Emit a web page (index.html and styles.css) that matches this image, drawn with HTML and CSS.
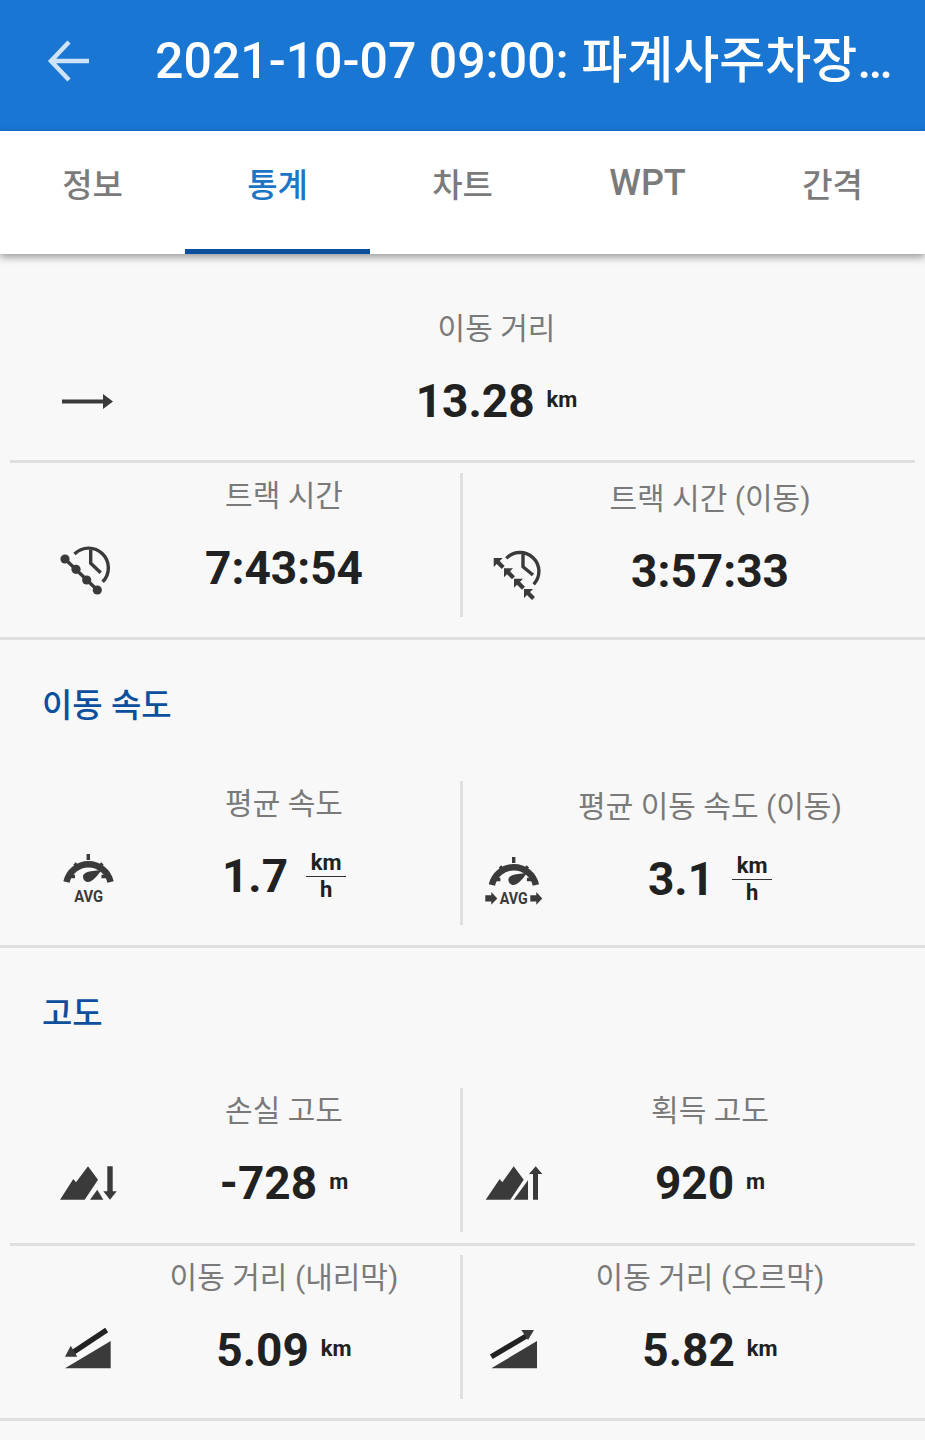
FILE: index.html
```html
<!DOCTYPE html>
<html lang="ko">
<head>
<meta charset="utf-8">
<title>트랙 통계</title>
<link rel="stylesheet" href="styles.css">
</head>
<body>
<header class="appbar">
  <svg class="back" viewBox="0 0 60 60"><path d="M47 30H11M27 11L9 30L27 49"/></svg>
  <h1 class="title">2021-10-07 09:00: 파계사주차장…</h1>
</header>
<nav class="tabs">
  <div class="tab">정보</div>
  <div class="tab active">통계</div>
  <div class="tab">차트</div>
  <div class="tab latin">WPT</div>
  <div class="tab">간격</div>
</nav>
<main class="content">
  <section class="row-wide">
    <div class="cell cell-wide">
      <div class="label">이동 거리</div>
      <svg class="icon" viewBox="0 0 60 60"><path d="M2 28.5H43V23L53 30.5L43 38V32.5H2Z"/></svg>
      <div class="value">13.28<span class="unit">km</span></div>
    </div>
  </section>
  <hr class="rule inset">
  <section class="row row-a">
    <div class="cell cell-left">
      <div class="label">트랙 시간</div>
      <svg class="icon" viewBox="0 0 60 60">
        <path class="line" d="M14.5 16A18.3 18.3 0 1 1 42.7 43.7M30.7 11.3V25.3L40.7 34.7"/>
        <path class="line" d="M5 21L37.3 52"/>
        <circle cx="5" cy="21" r="4.6"/><circle cx="16" cy="31.3" r="4.6"/><circle cx="26.7" cy="42" r="4.6"/><circle cx="37.3" cy="52" r="4.6"/>
      </svg>
      <div class="value">7:43:54</div>
    </div>
    <div class="cell cell-right shifted">
      <div class="label">트랙 시간 (이동)</div>
      <svg class="icon" viewBox="0 0 60 60">
        <path class="line" d="M23.4 17.3A18.3 18.3 0 1 1 50.7 43.3M40 12.3V25.7L50 34"/>
        <path d="M10.7 17h9l-3 3l5 5l-3 3l-5-5l-3 3z"/>
        <path d="M21 27.3h9l-3 3l5 5l-3 3l-5-5l-3 3z"/>
        <path d="M31 37.7h9l-3 3l5 5l-3 3l-5-5l-3 3z"/>
        <path d="M41 48h9l-3 3l5 5l-3 3l-5-5l-3 3z"/>
      </svg>
      <div class="value">3:57:33</div>
    </div>
  </section>
  <hr class="rule">
  <h2 class="heading">이동 속도</h2>
  <section class="row row-b">
    <div class="cell cell-left">
      <div class="label">평균 속도</div>
      <svg class="icon" viewBox="0 0 60 60">
        <path class="gauge" d="M6.5 36A22.5 22.5 0 0 1 50.5 36"/>
        <path class="line" d="M10 30.5H15M14.5 17.5L18 21M28.3 8V14M42.5 17.5L39 21M46.5 30.5H41.5"/>
        <path d="M23 30.5C23 27 27 25 41.7 24C35 33 31 36 28 36C25 36 23 33.5 23 30.5Z"/>
        <text class="avg" x="28.7" y="56" textLength="29" lengthAdjust="spacingAndGlyphs">AVG</text>
      </svg>
      <div class="value">1.7<span class="frac"><span>km</span><span class="den">h</span></span></div>
    </div>
    <div class="cell cell-right shifted">
      <div class="label">평균 이동 속도 (이동)</div>
      <svg class="icon" viewBox="0 0 60 60">
        <path class="gauge" d="M8.9 36A22.5 22.5 0 0 1 52.9 36"/>
        <path class="line" d="M12.4 30.5H17.4M16.9 17.5L20.4 21M30.7 8V14M44.9 17.5L41.4 21M48.9 30.5H43.9"/>
        <path d="M25.4 30.5C25.4 27 29.4 25 44.1 24C37.4 33 33.4 36 30.4 36C27.4 36 25.4 33.5 25.4 30.5Z"/>
        <text class="avg" x="30.7" y="54.7" textLength="28" lengthAdjust="spacingAndGlyphs">AVG</text>
        <path d="M2.3 46.3H8.3V43L14.3 49.4L8.3 55.7V52.4H2.3Z"/>
        <path d="M47.3 46.3H53.3V43L59.3 49.4L53.3 55.7V52.4H47.3Z"/>
      </svg>
      <div class="value">3.1<span class="frac"><span>km</span><span class="den">h</span></span></div>
    </div>
  </section>
  <hr class="rule">
  <h2 class="heading heading-alt">고도</h2>
  <section class="row row-c">
    <div class="cell cell-left">
      <div class="label">손실 고도</div>
      <svg class="icon" viewBox="0 0 60 60">
        <path d="M0 46.7L13.3 26L16 29.3L28 13.3L38 26.7L24.7 46.7Z"/>
        <path d="M30 46.7L37.3 36.7L43.3 46.7Z"/>
        <path d="M47.3 13.3H52.7V38.3H56.7L50 46.7L43.3 38.3H47.3Z"/>
      </svg>
      <div class="value">-728<span class="unit">m</span></div>
    </div>
    <div class="cell cell-right">
      <div class="label">획득 고도</div>
      <svg class="icon" viewBox="0 0 60 60">
        <path d="M2.7 46.7L16.7 26L19.3 29.3L30.7 13.3L40.7 26.7L27.3 46.7Z"/>
        <path d="M30.7 46.7L45 27.3V46.7Z"/>
        <path d="M50 46.7V21H46L52.7 13.3L59.3 21H55V46.7Z"/>
      </svg>
      <div class="value">920<span class="unit">m</span></div>
    </div>
  </section>
  <hr class="rule inset">
  <section class="row row-d">
    <div class="cell cell-left">
      <div class="label">이동 거리 (내리막)</div>
      <svg class="icon" viewBox="0 0 60 60">
        <path d="M5 48.3L50.7 21V48.3Z"/>
        <path class="line thick" d="M46.7 10L11.7 33.3"/>
        <path d="M5 36.7L10.7 25.7L17.3 36.7Z"/>
      </svg>
      <div class="value">5.09<span class="unit">km</span></div>
    </div>
    <div class="cell cell-right">
      <div class="label">이동 거리 (오르막)</div>
      <svg class="icon" viewBox="0 0 60 60">
        <path d="M8.3 48.3L54 21V48.3Z"/>
        <path class="line thick" d="M8.3 36.7L45 15"/>
        <path d="M38.3 10H51L45 20Z"/>
      </svg>
      <div class="value">5.82<span class="unit">km</span></div>
    </div>
  </section>
  <hr class="rule">
</main>
</body>
</html>
```
FILE: styles.css
```css
* { box-sizing: border-box; }
html, body { margin: 0; padding: 0; }
body {
  width: 925px;
  height: 1440px;
  overflow: hidden;
  background: #f8f8f8;
  font-family: Roboto, "Noto Sans CJK KR", sans-serif;
}
.appbar {
  height: 131px;
  background: #1976d3;
  display: flex;
  align-items: center;
  padding: 0 10px 10px 42px;
}
.back {
  width: 60px;
  height: 60px;
  flex: none;
  fill: none;
  stroke: #cfe3f8;
  stroke-width: 4.5;
}
.title {
  margin: 0 0 0 53px;
  font-size: 50px;
  line-height: 60px;
  font-weight: 500;
  color: #fff;
  white-space: nowrap;
  overflow: hidden;
}
.tabs {
  position: relative;
  z-index: 1;
  height: 123px;
  background: #fff;
  display: grid;
  grid-template-columns: repeat(5, 185px);
  box-shadow: 0 3px 8px rgba(0, 0, 0, 0.4);
}
.tab {
  display: flex;
  justify-content: center;
  align-items: center;
  padding-bottom: 20px;
  font-size: 33px;
  font-weight: 500;
  color: #7b7b7b;
}
.tab.latin { font-size: 36px; }
.tab.active {
  color: #1c76c4;
  border-bottom: 5px solid #0c4f9c;
  padding-bottom: 15px;
}
.content { display: flex; flex-direction: column; }
.rule {
  margin: 0;
  border: 0;
  height: 3px;
  background: #dfdfdf;
}
.rule.inset { margin: 0 10px; }
.row-wide { padding: 52px 0 29px; height: 206px; }
.row {
  display: grid;
  grid-template-columns: 463px 462px;
  position: relative;
}
.row-a { padding: 10px 0 20px; }
.row-b { padding: 0 0 20px; }
.row-c { padding: 0 0 11px; }
.row-d { padding: 9px 0 19px; }
.cell {
  height: 144px;
  display: grid;
  grid-template-rows: 46px 60px;
  row-gap: 19px;
  align-items: center;
  align-content: start;
}
.cell-wide {
  height: auto;
  grid-template-columns: 114px 765px;
  padding: 0;
}
.cell-left {
  grid-template-columns: 114px 348px;
  padding-right: 0;
  border-right: 3px solid #dfdfdf;
}
.cell-left .label, .cell-left .value { position: relative; left: -4px; }
.cell-right { grid-template-columns: 60px 386px; padding-left: 20px; }
.cell-right .label, .cell-right .value { position: relative; left: 0; }
.cell-right.shifted { padding-top: 3px; }
.cell-right .label, .cell-right .value { margin-right: 52px; }
.label {
  grid-column: 2;
  grid-row: 1;
  text-align: center;
  font-size: 30px;
  line-height: 46px;
  color: #7a7a7a;
  white-space: nowrap;
}
.icon {
  grid-column: 1;
  grid-row: 2;
  width: 60px;
  height: 60px;
  margin-left: 60px;
  fill: #3a3a3a;
}
.cell-right .icon { margin-left: 0; }
.line {
  fill: none;
  stroke: #3a3a3a;
  stroke-width: 3.4;
}
.line.thick { stroke: #222; stroke-width: 5.4; }
.gauge {
  fill: none;
  stroke: #3a3a3a;
  stroke-width: 6.5;
}
.avg {
  font-size: 17px;
  font-weight: 700;
  text-anchor: middle;
  fill: #3a3a3a;
}
.value {
  grid-column: 2;
  grid-row: 2;
  display: flex;
  justify-content: center;
  align-items: center;
  font-size: 46px;
  line-height: 60px;
  font-weight: 700;
  color: #212121;
  white-space: nowrap;
}
.unit {
  margin-left: 12px;
  font-size: 22px;
  line-height: 24px;
  font-weight: 700;
  position: relative;
  top: -1px;
}
.frac {
  display: flex;
  flex-direction: column;
  align-items: center;
  width: 40px;
  margin-left: 18px;
  font-size: 22px;
  line-height: 26px;
  font-weight: 700;
}
.den {
  width: 100%;
  text-align: center;
  border-top: 1px solid #333;
}
.heading {
  margin: 0;
  height: 141px;
  padding: 44px 0 0 42px;
  font-size: 33px;
  line-height: 44px;
  font-weight: 500;
  color: #0c4f9c;
}
.heading-alt { height: 140px; }
```
